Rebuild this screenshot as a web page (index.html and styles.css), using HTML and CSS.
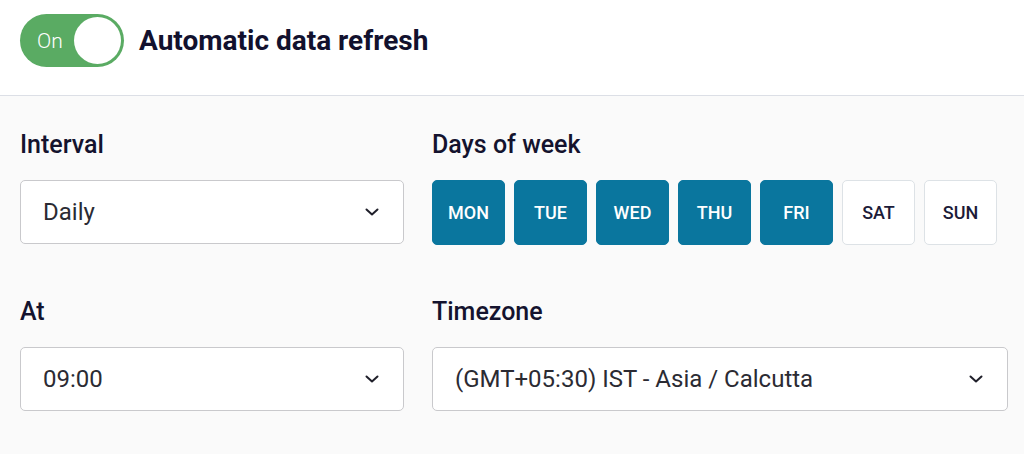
FILE: index.html
```html
<!DOCTYPE html>
<html lang="en">
<head>
<meta charset="utf-8">
<title>Automatic data refresh</title>
<link rel="stylesheet" href="styles.css">
</head>
<body>
<header class="header">
  <div class="toggle">
    <span class="toggle-label">On</span>
    <span class="toggle-knob"></span>
  </div>
  <h1 class="title">Automatic data refresh</h1>
</header>
<main class="panel">
  <div class="field">
    <label class="label">Interval</label>
    <div class="select">
      <span class="select-value">Daily</span>
      <svg class="chevron" width="14" height="8" viewBox="0 0 14 8"><polyline points="1.5,1.5 7,6.5 12.5,1.5" fill="none" stroke="#1f1f2a" stroke-width="2" stroke-linecap="round" stroke-linejoin="round"/></svg>
    </div>
  </div>
  <div class="field">
    <label class="label">Days of week</label>
    <div class="days">
      <button class="day day-on">MON</button>
      <button class="day day-on">TUE</button>
      <button class="day day-on">WED</button>
      <button class="day day-on">THU</button>
      <button class="day day-on">FRI</button>
      <button class="day">SAT</button>
      <button class="day">SUN</button>
    </div>
  </div>
  <div class="field">
    <label class="label">At</label>
    <div class="select">
      <span class="select-value">09:00</span>
      <svg class="chevron" width="14" height="8" viewBox="0 0 14 8"><polyline points="1.5,1.5 7,6.5 12.5,1.5" fill="none" stroke="#1f1f2a" stroke-width="2" stroke-linecap="round" stroke-linejoin="round"/></svg>
    </div>
  </div>
  <div class="field">
    <label class="label">Timezone</label>
    <div class="select">
      <span class="select-value">(GMT+05:30) IST - Asia / Calcutta</span>
      <svg class="chevron" width="14" height="8" viewBox="0 0 14 8"><polyline points="1.5,1.5 7,6.5 12.5,1.5" fill="none" stroke="#1f1f2a" stroke-width="2" stroke-linecap="round" stroke-linejoin="round"/></svg>
    </div>
  </div>
</main>
</body>
</html>
```

FILE: styles.css
```css
* { box-sizing: border-box; }
html, body { margin: 0; padding: 0; }
body {
  font-family: Roboto, "Liberation Sans", sans-serif;
  background: #fafafa;
  color: #14132e;
  width: 1024px;
  height: 454px;
  overflow: hidden;
}
.header {
  height: 96px;
  background: #ffffff;
  border-bottom: 1px solid #dcdfe6;
  display: flex;
  align-items: center;
  padding: 0 20px 14px;
  gap: 15px;
}
.toggle {
  width: 104px;
  height: 53px;
  border-radius: 27px;
  background: #5aab63;
  display: flex;
  align-items: center;
  justify-content: space-between;
  padding: 0 3px 0 17px;
}
.toggle-label {
  color: #ffffff;
  font-size: 21px;
  font-weight: 300;
}
.toggle-knob {
  width: 47px;
  height: 47px;
  border-radius: 50%;
  background: #ffffff;
}
.title {
  margin: 0;
  font-size: 28px;
  font-weight: 700;
  color: #12112e;
}
.panel {
  display: grid;
  grid-template-columns: 384px 576px;
  column-gap: 28px;
  row-gap: 52px;
  padding: 34px 20px 0;
}
.field {
  display: flex;
  flex-direction: column;
  gap: 20px;
}
.label {
  font-size: 25px;
  line-height: 30px;
  font-weight: 500;
  color: #14132e;
}
.select {
  height: 64px;
  background: #ffffff;
  border: 1px solid #c9c9cc;
  border-radius: 5px;
  display: flex;
  align-items: center;
  justify-content: space-between;
  padding: 0 24px 0 22px;
}
.select-value {
  font-size: 24px;
  color: #2b2b33;
}
.days {
  display: flex;
  gap: 9px;
}
.day {
  width: 73px;
  height: 65px;
  border-radius: 5px;
  border: 1px solid #dde2e6;
  background: #ffffff;
  color: #1c1b38;
  font-family: Roboto, "Liberation Sans", sans-serif;
  font-size: 18px;
  font-weight: 500;
  padding: 0;
}
.day-on {
  background: #0a769e;
  border-color: #0a769e;
  color: #ffffff;
}
```
